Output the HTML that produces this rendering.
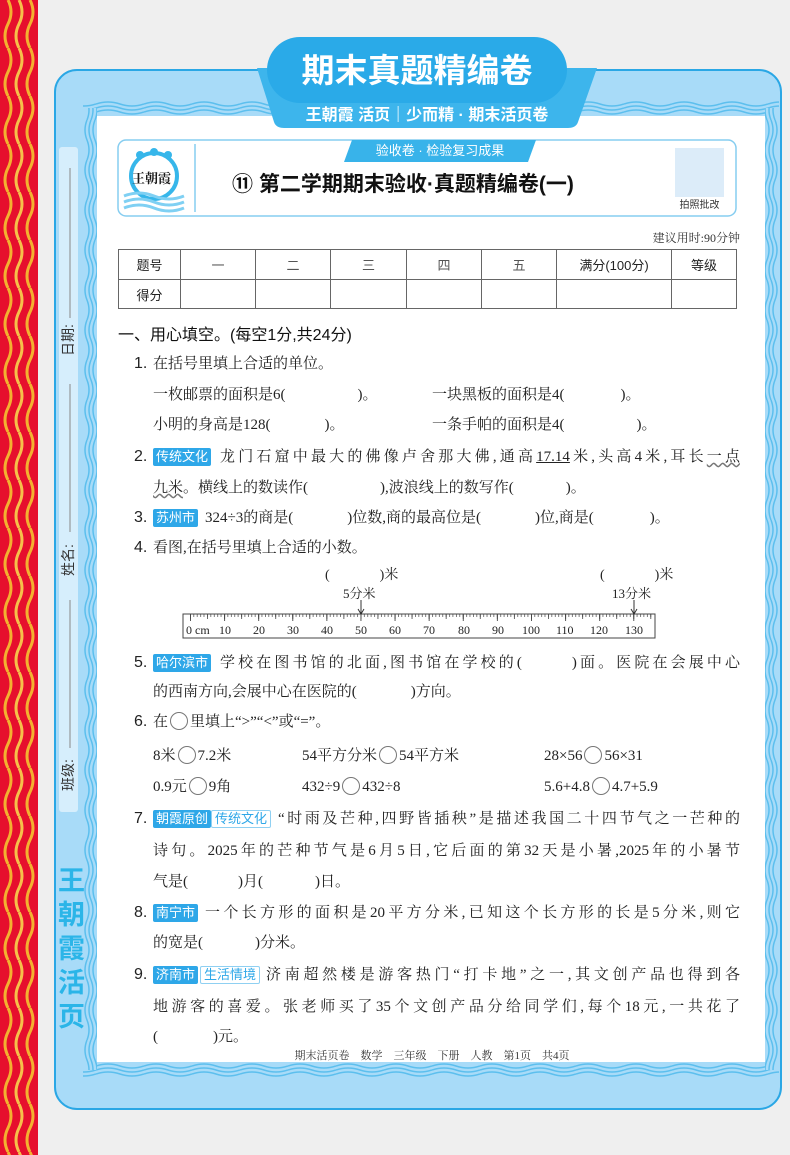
<!DOCTYPE html>
<html><head><meta charset="utf-8">
<style>
*{margin:0;padding:0;box-sizing:border-box}
body{width:790px;height:1155px;background:#efefef;position:relative;overflow:hidden;font-family:"Liberation Serif","Noto Serif CJK SC",serif;color:#222}
.a{position:absolute;white-space:nowrap}
.t{position:absolute;white-space:nowrap;font-size:15px;line-height:22px;height:22px}
.j{text-align:justify;text-align-last:justify}
.n{position:absolute;font-family:"Liberation Sans","Noto Sans CJK SC",sans-serif;font-size:16px;line-height:22px;left:134px;color:#222}
.tag{position:absolute;height:18px;line-height:18px;font-family:"Liberation Sans","Noto Sans CJK SC",sans-serif;font-size:13px;color:#fff;background:#2ea7e8;padding:0 3px;border-radius:2px}
.tag.o{background:#fff;color:#2ea7e8;border:1px solid #8fd0f2;line-height:16px}
.p{display:inline-block}
.c{display:inline-block;width:18px;height:18px;border:1px solid #777;border-radius:50%;vertical-align:-4px;margin:0 2px}
.sb{position:absolute;font-family:"Liberation Sans","Noto Sans CJK SC",sans-serif;font-size:14px;transform:rotate(-90deg);color:#333}
</style></head><body>
<svg class="a" style="left:0;top:0" width="790" height="1155">
<defs>
<pattern id="rw" patternUnits="userSpaceOnUse" width="38" height="48">
<rect width="38" height="48" fill="#e60f2d"/>
<path d="M8 0 Q14 12 8 24 T8 48" stroke="#f3b130" stroke-width="3" fill="none"/>
<path d="M19 0 Q25 12 19 24 T19 48" stroke="#f6c04a" stroke-width="3" fill="none"/>
<path d="M30 0 Q36 12 30 24 T30 48" stroke="#f3b130" stroke-width="3" fill="none"/>
</pattern>
<pattern id="hw" patternUnits="userSpaceOnUse" width="48" height="16" y="100">
<rect width="48" height="16" fill="#a8dbf8"/>
<path d="M0 4 Q12 0 24 4 T48 4" stroke="#5cbfee" stroke-width="1.5" fill="none"/>
<path d="M0 8 Q12 4 24 8 T48 8" stroke="#5cbfee" stroke-width="1.5" fill="none"/>
<path d="M0 12 Q12 8 24 12 T48 12" stroke="#5cbfee" stroke-width="1.5" fill="none"/>
</pattern>
<pattern id="hb" patternUnits="userSpaceOnUse" width="48" height="16" y="1062">
<rect width="48" height="16" fill="#a8dbf8"/>
<path d="M0 4 Q12 0 24 4 T48 4" stroke="#5cbfee" stroke-width="1.5" fill="none"/>
<path d="M0 8 Q12 4 24 8 T48 8" stroke="#5cbfee" stroke-width="1.5" fill="none"/>
<path d="M0 12 Q12 8 24 12 T48 12" stroke="#5cbfee" stroke-width="1.5" fill="none"/>
</pattern>
<pattern id="vw" patternUnits="userSpaceOnUse" width="14" height="40" x="83">
<rect width="14" height="40" fill="#a8dbf8"/>
<path d="M4 0 Q0 10 4 20 T4 40" stroke="#5cbfee" stroke-width="1.5" fill="none"/>
<path d="M8 0 Q4 10 8 20 T8 40" stroke="#5cbfee" stroke-width="1.5" fill="none"/>
<path d="M12 0 Q8 10 12 20 T12 40" stroke="#5cbfee" stroke-width="1.5" fill="none"/>
</pattern>
<pattern id="vr" patternUnits="userSpaceOnUse" width="14" height="40" x="765">
<rect width="14" height="40" fill="#a8dbf8"/>
<path d="M2 0 Q6 10 2 20 T2 40" stroke="#5cbfee" stroke-width="1.5" fill="none"/>
<path d="M6 0 Q10 10 6 20 T6 40" stroke="#5cbfee" stroke-width="1.5" fill="none"/>
<path d="M10 0 Q14 10 10 20 T10 40" stroke="#5cbfee" stroke-width="1.5" fill="none"/>
</pattern>
<pattern id="t1" patternUnits="userSpaceOnUse" x="190" y="614" width="3.41" height="10"><rect x="0" y="0" width="0.7" height="3" fill="#444"/></pattern>
<pattern id="t5" patternUnits="userSpaceOnUse" x="190" y="614" width="17.05" height="10"><rect x="0" y="0" width="0.8" height="5" fill="#444"/></pattern>
<pattern id="t10" patternUnits="userSpaceOnUse" x="190" y="614" width="34.1" height="10"><rect x="0" y="0" width="0.9" height="7" fill="#444"/></pattern>
</defs>
<rect x="0" y="0" width="38" height="1155" fill="url(#rw)"/>
<rect x="55" y="70" width="726" height="1039" rx="22" fill="#a8dbf8" stroke="#2aa7e5" stroke-width="2"/>
<rect x="59" y="147" width="19" height="665" rx="3" fill="#d6eefc"/>
<rect x="95" y="114" width="670" height="950" fill="#fff"/>
<rect x="83" y="100" width="696" height="16" fill="url(#hw)"/>
<rect x="83" y="1062" width="696" height="16" fill="url(#hb)"/>
<rect x="83" y="108" width="14" height="962" fill="url(#vw)"/>
<rect x="765" y="108" width="14" height="962" fill="url(#vr)"/>
<line x1="70" y1="168" x2="70" y2="318" stroke="#888" stroke-width="1"/>
<line x1="70" y1="384" x2="70" y2="532" stroke="#888" stroke-width="1"/>
<line x1="70" y1="600" x2="70" y2="748" stroke="#888" stroke-width="1"/>
<path d="M257 68 L597 68 L578 122 Q576 128 568 128 L284 128 Q276 128 274 122 Z" fill="#3db5ec"/>
<rect x="267" y="37" width="300" height="66" rx="33" fill="#2aaae8"/>
<rect x="118" y="140" width="618" height="76" rx="8" fill="#fff" stroke="#86cdf0" stroke-width="1.5"/>
<line x1="195" y1="144" x2="195" y2="212" stroke="#86cdf0" stroke-width="1.5"/>
<path d="M352 140 L536 140 L528 162 L344 162 Z" fill="#38b3ea"/>
<rect x="675" y="148" width="49" height="49" fill="#dcecf9"/>
<circle cx="154" cy="176" r="23" fill="#fff" stroke="#36b6ea" stroke-width="4"/>
<path d="M124 196 Q139 190 154 196 T184 196 M124 202 Q139 196 154 202 T184 202 M124 208 Q139 202 154 208 T184 208" stroke="#7fd0f3" stroke-width="3" fill="none"/>
<circle cx="140" cy="155" r="4" fill="#36b6ea"/><circle cx="154" cy="152" r="4" fill="#36b6ea"/><circle cx="168" cy="155" r="4" fill="#36b6ea"/>
<rect x="183" y="614" width="472" height="24" fill="#fff" stroke="#444" stroke-width="1"/>
<rect x="190" y="614" width="463" height="8" fill="url(#t1)"/>
<rect x="190" y="614" width="463" height="8" fill="url(#t5)"/>
<rect x="190" y="614" width="463" height="8" fill="url(#t10)"/>
<g font-size="12" fill="#222" font-family="Liberation Serif">
<text x="186" y="634">0 cm</text><text x="219" y="634">10</text><text x="253" y="634">20</text><text x="287" y="634">30</text><text x="321" y="634">40</text><text x="355" y="634">50</text><text x="389" y="634">60</text><text x="423" y="634">70</text><text x="458" y="634">80</text><text x="492" y="634">90</text><text x="522" y="634">100</text><text x="556" y="634">110</text><text x="590" y="634">120</text><text x="625" y="634">130</text>
</g>
<path d="M361 600V613M358 609L361 614L364 609M634 600V613M631 609L634 614L637 609" stroke="#333" stroke-width="1" fill="none"/>
</svg>
<div class="a" style="left:267px;top:49px;width:300px;text-align:center;font-family:'Liberation Sans','Noto Sans CJK SC',sans-serif;font-weight:bold;font-size:33px;line-height:44px;color:#fff">期末真题精编卷</div>
<div class="a" style="left:257px;top:105px;width:340px;text-align:center;font-family:'Liberation Sans','Noto Sans CJK SC',sans-serif;font-weight:bold;font-size:16px;line-height:22px;color:#fff">王朝霞 活页｜少而精 · 期末活页卷</div>
<div class="a" style="left:132px;top:168px;font-family:'Noto Serif CJK SC',serif;font-weight:bold;font-size:13px;color:#1a1a1a">王朝霞</div>
<div class="a" style="left:344px;top:141px;width:192px;text-align:center;font-family:'Liberation Sans','Noto Sans CJK SC',sans-serif;font-size:13px;line-height:20px;color:#fff">验收卷 · 检验复习成果</div>
<div class="a" style="left:232px;top:170px;font-family:'Liberation Sans','Noto Sans CJK SC',sans-serif;font-weight:bold;font-size:21px;line-height:30px;color:#111">⑪ 第二学期期末验收·真题精编卷(一)</div>
<div class="a" style="left:675px;top:196px;width:49px;text-align:center;font-family:'Liberation Sans','Noto Sans CJK SC',sans-serif;font-size:10px;color:#333">拍照批改</div>
<div class="sb" style="left:52px;top:330px">日期:</div>
<div class="sb" style="left:52px;top:550px">姓名:</div>
<div class="sb" style="left:52px;top:765px">班级:</div>
<div class="a" style="left:55px;top:866px;width:28px;writing-mode:vertical-rl;font-family:'Liberation Sans','Noto Sans CJK SC',sans-serif;font-weight:bold;font-size:27px;line-height:28px;letter-spacing:7px;color:#2bb5e8">王朝霞活页</div>
<div class="a" style="left:600px;top:229px;width:140px;text-align:right;font-size:12px;color:#333">建议用时:90分钟</div>
<table class="a" style="left:118px;top:249px;border-collapse:collapse;font-family:'Liberation Sans','Noto Sans CJK SC',sans-serif;font-size:13px;color:#222">
<tr style="height:30px"><td style="width:62px;border:1px solid #666;text-align:center">题号</td><td style="width:75px;border:1px solid #666;text-align:center;color:#555">一</td><td style="width:75px;border:1px solid #666;text-align:center;color:#555">二</td><td style="width:76px;border:1px solid #666;text-align:center;color:#555">三</td><td style="width:75px;border:1px solid #666;text-align:center;color:#555">四</td><td style="width:75px;border:1px solid #666;text-align:center;color:#555">五</td><td style="width:115px;border:1px solid #666;text-align:center">满分(100分)</td><td style="width:65px;border:1px solid #666;text-align:center">等级</td></tr>
<tr style="height:29px"><td style="border:1px solid #666;text-align:center">得分</td><td style="border:1px solid #666"></td><td style="border:1px solid #666"></td><td style="border:1px solid #666"></td><td style="border:1px solid #666"></td><td style="border:1px solid #666"></td><td style="border:1px solid #666"></td><td style="border:1px solid #666"></td></tr>
</table>
<div class="a" style="left:118px;top:324px;font-family:'Liberation Sans','Noto Sans CJK SC',sans-serif;font-size:16px;line-height:24px;color:#111">一、用心填空。(每空1分,共24分)</div>

<div class="n" style="top:353px">1.</div><div class="t" style="left:153px;top:353px">在括号里填上合适的单位。</div>
<div class="t" style="left:153px;top:384px">一枚邮票的面积是6(<span class="p" style="width:72px"></span>)。</div>
<div class="t" style="left:432px;top:384px">一块黑板的面积是4(<span class="p" style="width:56px"></span>)。</div>
<div class="t" style="left:153px;top:414px">小明的身高是128(<span class="p" style="width:54px"></span>)。</div>
<div class="t" style="left:432px;top:414px">一条手帕的面积是4(<span class="p" style="width:72px"></span>)。</div>

<div class="n" style="top:446px">2.</div><div class="tag" style="left:153px;top:448px">传统文化</div>
<div class="t j" style="left:220px;top:446px;width:520px">龙门石窟中最大的佛像卢舍那大佛,通高<span style="text-decoration:underline">17.14</span>米,头高4米,耳长<span style="text-decoration:underline wavy #777">一点</span></div>
<div class="t" style="left:153px;top:477px"><span style="text-decoration:underline wavy #777">九米</span>。横线上的数读作(<span class="p" style="width:72px"></span>),波浪线上的数写作(<span class="p" style="width:52px"></span>)。</div>

<div class="n" style="top:507px">3.</div><div class="tag" style="left:153px;top:509px">苏州市</div>
<div class="t" style="left:205px;top:507px">324÷3的商是(<span class="p" style="width:54px"></span>)位数,商的最高位是(<span class="p" style="width:54px"></span>)位,商是(<span class="p" style="width:56px"></span>)。</div>
<div class="n" style="top:537px">4.</div><div class="t" style="left:153px;top:537px">看图,在括号里填上合适的小数。</div>

<div class="t" style="left:325px;top:565px;font-size:14px">(<span class="p" style="width:50px"></span>)米</div>
<div class="t" style="left:343px;top:583px;font-size:13px">5分米</div>
<div class="t" style="left:600px;top:565px;font-size:14px">(<span class="p" style="width:50px"></span>)米</div>
<div class="t" style="left:612px;top:583px;font-size:13px">13分米</div>

<div class="n" style="top:652px">5.</div><div class="tag" style="left:153px;top:654px">哈尔滨市</div>
<div class="t j" style="left:220px;top:652px;width:520px">学校在图书馆的北面,图书馆在学校的(<span class="p" style="width:50px"></span>)面。医院在会展中心</div>
<div class="t" style="left:153px;top:681px">的西南方向,会展中心在医院的(<span class="p" style="width:54px"></span>)方向。</div>

<div class="n" style="top:711px">6.</div><div class="t" style="left:153px;top:711px">在<span class="c"></span>里填上“&gt;”“&lt;”或“=”。</div>
<div class="t" style="left:153px;top:745px">8米<span class="c"></span>7.2米</div>
<div class="t" style="left:302px;top:745px">54平方分米<span class="c"></span>54平方米</div>
<div class="t" style="left:544px;top:745px">28×56<span class="c"></span>56×31</div>
<div class="t" style="left:153px;top:776px">0.9元<span class="c"></span>9角</div>
<div class="t" style="left:302px;top:776px">432÷9<span class="c"></span>432÷8</div>
<div class="t" style="left:544px;top:776px">5.6+4.8<span class="c"></span>4.7+5.9</div>

<div class="n" style="top:808px">7.</div><div class="tag" style="left:153px;top:810px">朝霞原创</div><div class="tag o" style="left:211px;top:810px">传统文化</div>
<div class="t j" style="left:278px;top:808px;width:462px">“时雨及芒种,四野皆插秧”是描述我国二十四节气之一芒种的</div>
<div class="t j" style="left:153px;top:840px;width:587px">诗句。2025年的芒种节气是6月5日,它后面的第32天是小暑,2025年的小暑节</div>
<div class="t" style="left:153px;top:871px">气是(<span class="p" style="width:50px"></span>)月(<span class="p" style="width:52px"></span>)日。</div>

<div class="n" style="top:902px">8.</div><div class="tag" style="left:153px;top:904px">南宁市</div>
<div class="t j" style="left:205px;top:902px;width:535px">一个长方形的面积是20平方分米,已知这个长方形的长是5分米,则它</div>
<div class="t" style="left:153px;top:932px">的宽是(<span class="p" style="width:52px"></span>)分米。</div>

<div class="n" style="top:964px">9.</div><div class="tag" style="left:153px;top:966px">济南市</div><div class="tag o" style="left:200px;top:966px">生活情境</div>
<div class="t j" style="left:266px;top:964px;width:474px">济南超然楼是游客热门“打卡地”之一,其文创产品也得到各</div>
<div class="t j" style="left:153px;top:996px;width:587px">地游客的喜爱。张老师买了35个文创产品分给同学们,每个18元,一共花了</div>
<div class="t" style="left:153px;top:1026px">(<span class="p" style="width:55px"></span>)元。</div>

<div class="a" style="left:250px;top:1048px;width:364px;text-align:center;font-size:11px;line-height:16px;color:#333">期末活页卷　数学　三年级　下册　人教　第1页　共4页</div>
</body></html>
